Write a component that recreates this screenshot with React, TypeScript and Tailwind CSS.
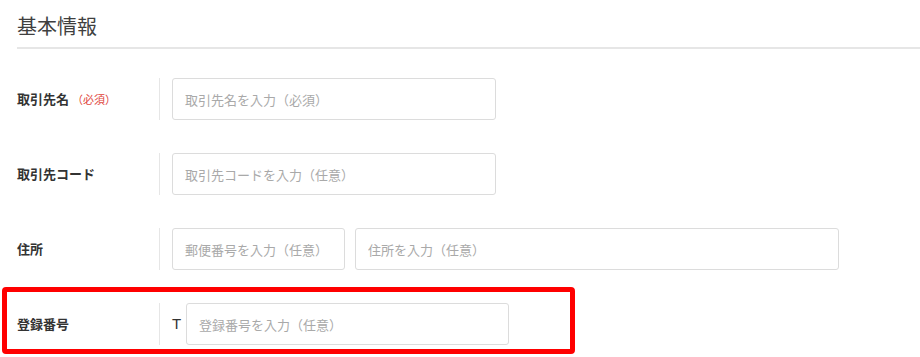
import React from "react";

const font = { fontFamily: '"Noto Sans CJK JP", "Noto Sans", sans-serif' };

function Field({ placeholder, className }: { placeholder: string; className: string }) {
  return (
    <input
      type="text"
      placeholder={placeholder}
      className={`h-[42px] rounded-[3px] border border-[#dcdcdc] bg-white px-3 text-[13px] text-[#333] outline-none placeholder:text-[#a9a9a9] ${className}`}
      style={font}
    />
  );
}

function Row({ label, required, children }: { label: string; required?: boolean; children: React.ReactNode }) {
  return (
    <div className="flex h-[42px] items-stretch">
      <div className="flex w-[142px] items-center text-[13px] font-bold text-[#333]">
        {label}
        {required && <span className="ml-[3px] text-[11px] font-normal text-[#e0463c]">（必須）</span>}
      </div>
      <div className="w-px bg-[#e6e6e6]" />
      <div className="flex items-center pl-3">{children}</div>
    </div>
  );
}

export default function App() {
  return (
    <div className="h-[357px] w-[920px] overflow-hidden bg-white pl-[17px]" style={font}>
      <div className="border-b-2 border-[#e6e6e6] pt-[12px] pb-[7px] text-[20px] leading-[28px] text-[#3f3f3f]">
        基本情報
      </div>

      <div className="mt-[29px] flex flex-col gap-[33px]">
        <Row label="取引先名" required>
          <Field placeholder="取引先名を入力（必須）" className="w-[324px]" />
        </Row>
        <Row label="取引先コード">
          <Field placeholder="取引先コードを入力（任意）" className="w-[324px]" />
        </Row>
        <Row label="住所">
          <div className="flex gap-[10px]">
            <Field placeholder="郵便番号を入力（任意）" className="w-[173px]" />
            <Field placeholder="住所を入力（任意）" className="w-[484px]" />
          </div>
        </Row>
        <div className="relative">
          <Row label="登録番号">
            <span className="mr-[5px] w-[9px] text-[15px] text-[#333]" style={{ fontFamily: '"Liberation Sans", sans-serif' }}>
              T
            </span>
            <Field placeholder="登録番号を入力（任意）" className="w-[323px]" />
          </Row>
          {/* annotation frame */}
          <div className="pointer-events-none absolute -top-[16px] -bottom-[9px] -left-[15px] w-[573px] rounded-[4px] border-[5px] border-[#ff0000]" />
        </div>
      </div>
    </div>
  );
}
